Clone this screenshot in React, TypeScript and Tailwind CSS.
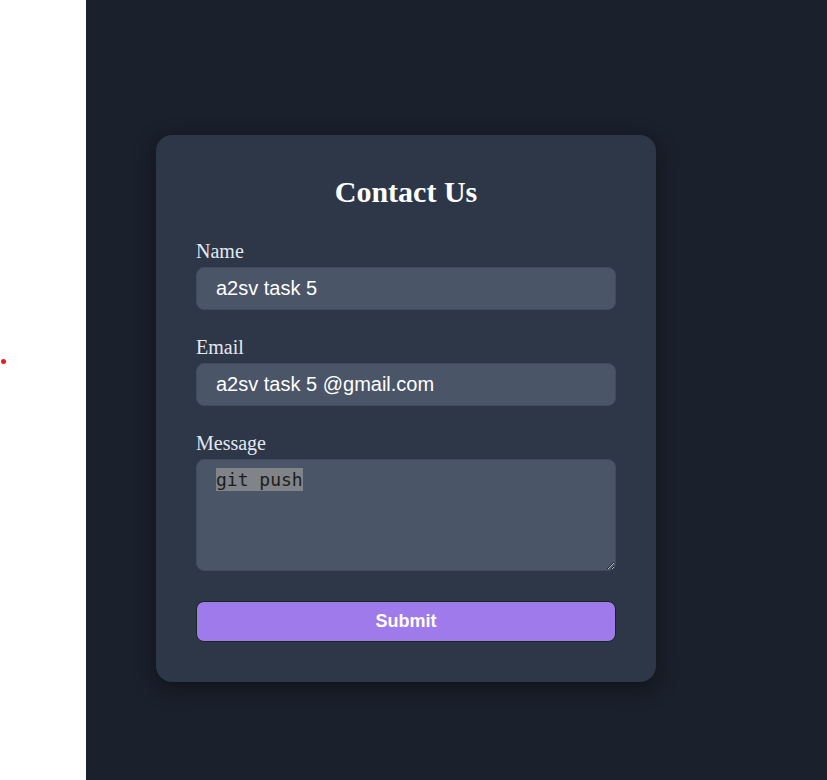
import { useEffect, useRef } from 'react'

const serif = { fontFamily: '"Liberation Serif", "Times New Roman", serif' }

export default function App() {
  const msgRef = useRef<HTMLTextAreaElement>(null)

  useEffect(() => {
    const el = msgRef.current
    if (!el) return
    el.focus()
    el.setSelectionRange(0, 8)
  }, [])

  return (
    <div className="flex min-h-[780px]">
      {/* left strip */}
      <div className="w-[86px] shrink-0 bg-white pt-[359px] pl-px">
        <div className="h-[5px] w-[5px] rounded-full bg-[#e81c1c]" />
      </div>

      <div className="flex-1 bg-[#1a202c] pt-[135px] pl-[70px]">
        <div className="w-[500px] rounded-2xl bg-[#2d3748] px-10 pt-10 pb-10 shadow-[0_6px_22px_rgba(0,0,0,0.45)]">
          <h2 className="text-center text-[30px] font-bold leading-[34px] text-white" style={serif}>
            Contact Us
          </h2>

          <form className="mt-[31px]" onSubmit={e => e.preventDefault()}>
            <div className="mb-[26px]">
              <label className="mb-[4px] block text-[20px] leading-[23px] text-[#e2e8f0]" style={serif}>Name</label>
              <input
                defaultValue="a2sv task 5"
                className="block h-[43px] w-full rounded-lg border border-[#414b5b] bg-[#4a5568] pl-[19px] text-[20px] text-white outline-none font-['Liberation_Sans',Arial,sans-serif]"
              />
            </div>

            <div className="mb-[26px]">
              <label className="mb-[4px] block text-[20px] leading-[23px] text-[#e2e8f0]" style={serif}>Email</label>
              <input
                defaultValue="a2sv task 5 @gmail.com"
                className="block h-[43px] w-full rounded-lg border border-[#414b5b] bg-[#4a5568] pl-[19px] text-[20px] text-white outline-none font-['Liberation_Sans',Arial,sans-serif]"
              />
            </div>

            <div className="mb-[30px]">
              <label className="mb-[4px] block text-[20px] leading-[23px] text-[#e2e8f0]" style={serif}>Message</label>
              <textarea
                ref={msgRef}
                defaultValue="git push"
                className="block h-[112px] w-full rounded-lg border border-[#414b5b] bg-[#4a5568] pl-[19px] pt-[8px] text-[18px] leading-[23px] text-[#1d1d1d] outline-none selection:bg-[#808388] selection:text-[#1d1d1d] font-['DejaVu_Sans_Mono','Liberation_Mono',monospace]"
              />
            </div>

            <button
              type="submit"
              className="block h-[41px] w-full rounded-lg border border-[#15291a] bg-[#9f7aea] text-[18px] font-bold text-white font-['Liberation_Sans',Arial,sans-serif]"
            >
              Submit
            </button>
          </form>
        </div>
      </div>
    </div>
  )
}
